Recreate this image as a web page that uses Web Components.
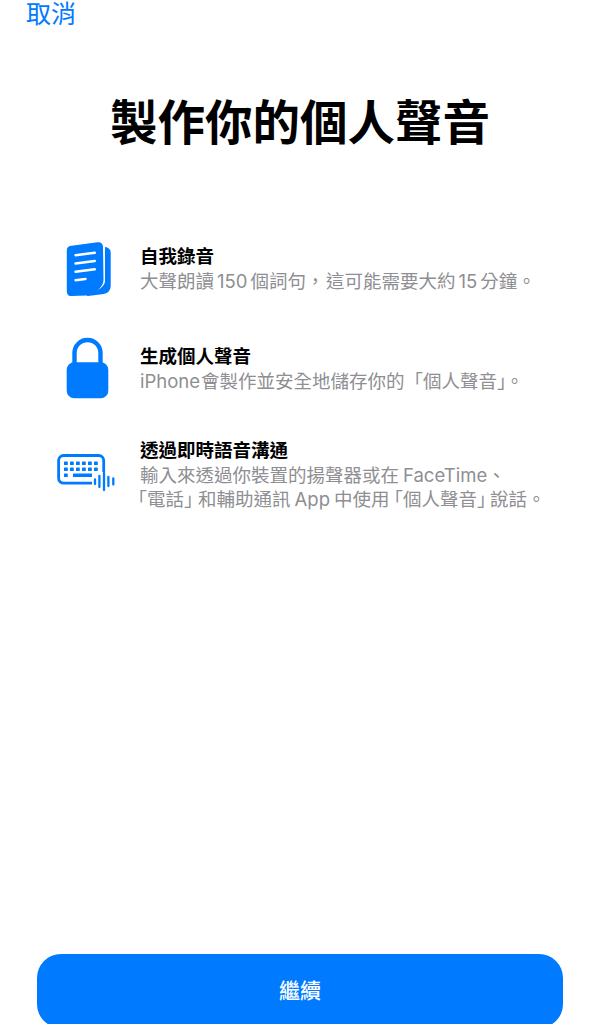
<!DOCTYPE html>
<html lang="zh-Hant">
<head>
<meta charset="utf-8">
<title>製作你的個人聲音</title>
<style>
  html, body { margin: 0; height: 100%; background: #fff; overflow: hidden; }
  body { font-family: Inter, "Noto Sans CJK TC", sans-serif; }
  .tight { letter-spacing: -5px; }
  .close { letter-spacing: -1px; }
  .close-wide { letter-spacing: -5.500px; }
  .close-mid { letter-spacing: -4.500px; }
  .second-line { margin-left: -11.500px; }
</style>
</head>
<body>
<voice-setup-page>
  <nav-link slot="nav">取消</nav-link>
  <page-title slot="title">製作你的個人聲音</page-title>
  <feature-row heading="自我錄音" icon="doc" style="--row-gap:0px">大聲朗讀<n-s></n-s>150<n-s></n-s>個詞句，<n-s style="width:1.500px"></n-s>這可能需要大約<n-s></n-s>15<n-s></n-s>分鐘。</feature-row>
  <feature-row heading="生成個人聲音" icon="lock" style="--row-gap:51px">iPhone<n-s style="width:1px"></n-s>會製作並安全地儲存你的「個人聲音<span class="close">」</span>。</feature-row>
  <feature-row heading="透過即時語音溝通" icon="keyboard" style="--row-gap:45px">輸入來透過你裝置的揚聲器或在<n-s style="width:4px"></n-s>FaceTime、<br><span class="second-line">「電話<span class="close-mid">」</span>和輔助通訊<n-s style="width:4px"></n-s>App<n-s style="width:4px"></n-s>中使<span class="tight">用</span>「個人聲音<span class="close-wide">」</span>說話。</span></feature-row>
  <primary-button slot="action">繼續</primary-button>
</voice-setup-page>

<script>
  // Narrow gap between CJK and Latin runs.
  class NarrowSpace extends HTMLElement {
    constructor() {
      super();
      this.attachShadow({ mode: 'open' }).innerHTML =
        '<style>:host{display:inline-block;width:3px}</style>';
    }
  }

  class VoiceSetupPage extends HTMLElement {
    constructor() {
      super();
      this.attachShadow({ mode: 'open' }).innerHTML = `
        <style>
          :host { display: flex; flex-direction: column; height: 1024px; overflow: hidden; background: #fff; }
          .rows { display: flex; flex-direction: column; padding: 91px 0 0 48px; }
          .action { margin-top: auto; padding: 0 37px; height: 70px; }
        </style>
        <slot name="nav"></slot>
        <slot name="title"></slot>
        <div class="rows"><slot></slot></div>
        <div class="action"><slot name="action"></slot></div>`;
    }
  }

  class NavLink extends HTMLElement {
    constructor() {
      super();
      this.attachShadow({ mode: 'open' }).innerHTML = `
        <style>
          :host { display: block; height: 26px; padding-left: 26px; font-family: "Liberation Sans", "Noto Sans CJK TC", sans-serif; font-size: 25px; line-height: 28px; color: #007aff; }
        </style><slot></slot>`;
    }
  }

  class PageTitle extends HTMLElement {
    constructor() {
      super();
      this.attachShadow({ mode: 'open' }).innerHTML = `
        <style>
          :host { display: block; margin-top: 67px; text-align: center; font-size: 47.500px; font-weight: 700; line-height: 60px; color: #000; }
        </style><slot></slot>`;
    }
  }

  // Icons are drawn in page-aligned coordinates inside their row box; they overflow the row slightly.
  const ICONS = {
    doc: `<svg viewBox="48 244 80 49" width="80" height="49">
      <path fill="#007aff" d="M105 247c3.200.6 5.700 2 5.700 5.500v33c0 5-2.500 7.500-7 8.500l-15.700 2.100c-1.300.1-1.500-1-.2-1.400 8-2.500 16.700-7.500 17.200-13.200z"/>
      <path fill="#007aff" d="M71.500 245.800 97.500 242.200c3.300-.4 5.500 1.300 5.500 4.500l.5 33.300c0 7-9 15-17 15.500l-15 .6c-3.500.1-4.700-2-4.700-5V250.500c0-2.800 1.500-4.300 4.200-4.700z"/>
      <g stroke="#fff" stroke-width="2.400" stroke-linecap="round" fill="none">
        <path d="M75.500 255.200 94.800 252.800M75.500 263.500 94.800 261M75.500 271.800 94.800 269.300M75.500 280.200 85.500 279"/>
      </g>
    </svg>`,
    lock: `<svg viewBox="48 344 80 49" width="80" height="49">
      <path fill="none" stroke="#007aff" stroke-width="4.400" d="M74.500 366V353a13 13 0 0 1 26 0v13"/>
      <rect x="66.700" y="362.300" width="41.600" height="36" rx="7.500" fill="#007aff"/>
    </svg>`,
    keyboard: `<svg viewBox="48 438 80 73" width="80" height="73">
      <path fill="none" stroke="#007aff" stroke-width="2.800" d="M103.700 472V460.500a5 5 0 0 0-5-5H63.600a5 5 0 0 0-5 5v17.700a5 5 0 0 0 5 5H92"/>
      <g fill="#007aff">
        <rect x="64" y="461.500" width="3.800" height="3.600" rx=".6"/><rect x="70" y="461.500" width="3.800" height="3.600" rx=".6"/><rect x="76" y="461.500" width="3.800" height="3.600" rx=".6"/><rect x="82" y="461.500" width="3.800" height="3.600" rx=".6"/><rect x="88" y="461.500" width="3.800" height="3.600" rx=".6"/><rect x="94" y="461.500" width="3.800" height="3.600" rx=".6"/>
        <rect x="64" y="467.500" width="3.800" height="3.600" rx=".6"/><rect x="70" y="467.500" width="3.800" height="3.600" rx=".6"/><rect x="76" y="467.500" width="3.800" height="3.600" rx=".6"/><rect x="82" y="467.500" width="3.800" height="3.600" rx=".6"/><rect x="88" y="467.500" width="3.800" height="3.600" rx=".6"/><rect x="94" y="467.500" width="3.800" height="3.600" rx=".6"/>
        <rect x="64" y="473.500" width="3.800" height="3.600" rx=".6"/><rect x="73" y="473.500" width="19" height="3.600" rx=".6"/>
      </g>
      <g stroke="#007aff" stroke-width="2.300" stroke-linecap="round" fill="none">
        <path d="M95 479.500v4.500M99.400 476v11M104 473v17M108.400 477v9M113.300 478.500v6"/>
      </g>
    </svg>`
  };

  class FeatureRow extends HTMLElement {
    constructor() {
      super();
      this.attachShadow({ mode: 'open' }).innerHTML = `
        <style>
          :host { display: grid; grid-template-columns: 80px 1fr; column-gap: 12px; margin-top: var(--row-gap, 0); font-size: 18.500px; line-height: 24.500px; }
          svg { display: block; overflow: visible; }
          h3 { margin: 0; font: inherit; font-weight: 700; color: #000; }
          p { margin: 0; color: #8e8e93; white-space: nowrap; }
        </style>
        <div class="icon"></div>
        <div>
          <h3></h3>
          <p><slot></slot></p>
        </div>`;
    }
    connectedCallback() {
      this.shadowRoot.querySelector('h3').textContent = this.getAttribute('heading');
      this.shadowRoot.querySelector('.icon').innerHTML = ICONS[this.getAttribute('icon')];
    }
  }

  class PrimaryButton extends HTMLElement {
    constructor() {
      super();
      this.attachShadow({ mode: 'open' }).innerHTML = `
        <style>
          :host { display: flex; align-items: center; justify-content: center; height: 74px; padding-bottom: 4px; box-sizing: border-box; border-radius: 24px; background: #007aff; color: #fff; font-size: 21px; font-weight: 500; }
        </style><slot></slot>`;
    }
  }

  customElements.define('n-s', NarrowSpace);
  customElements.define('voice-setup-page', VoiceSetupPage);
  customElements.define('nav-link', NavLink);
  customElements.define('page-title', PageTitle);
  customElements.define('feature-row', FeatureRow);
  customElements.define('primary-button', PrimaryButton);
</script>
</body>
</html>
